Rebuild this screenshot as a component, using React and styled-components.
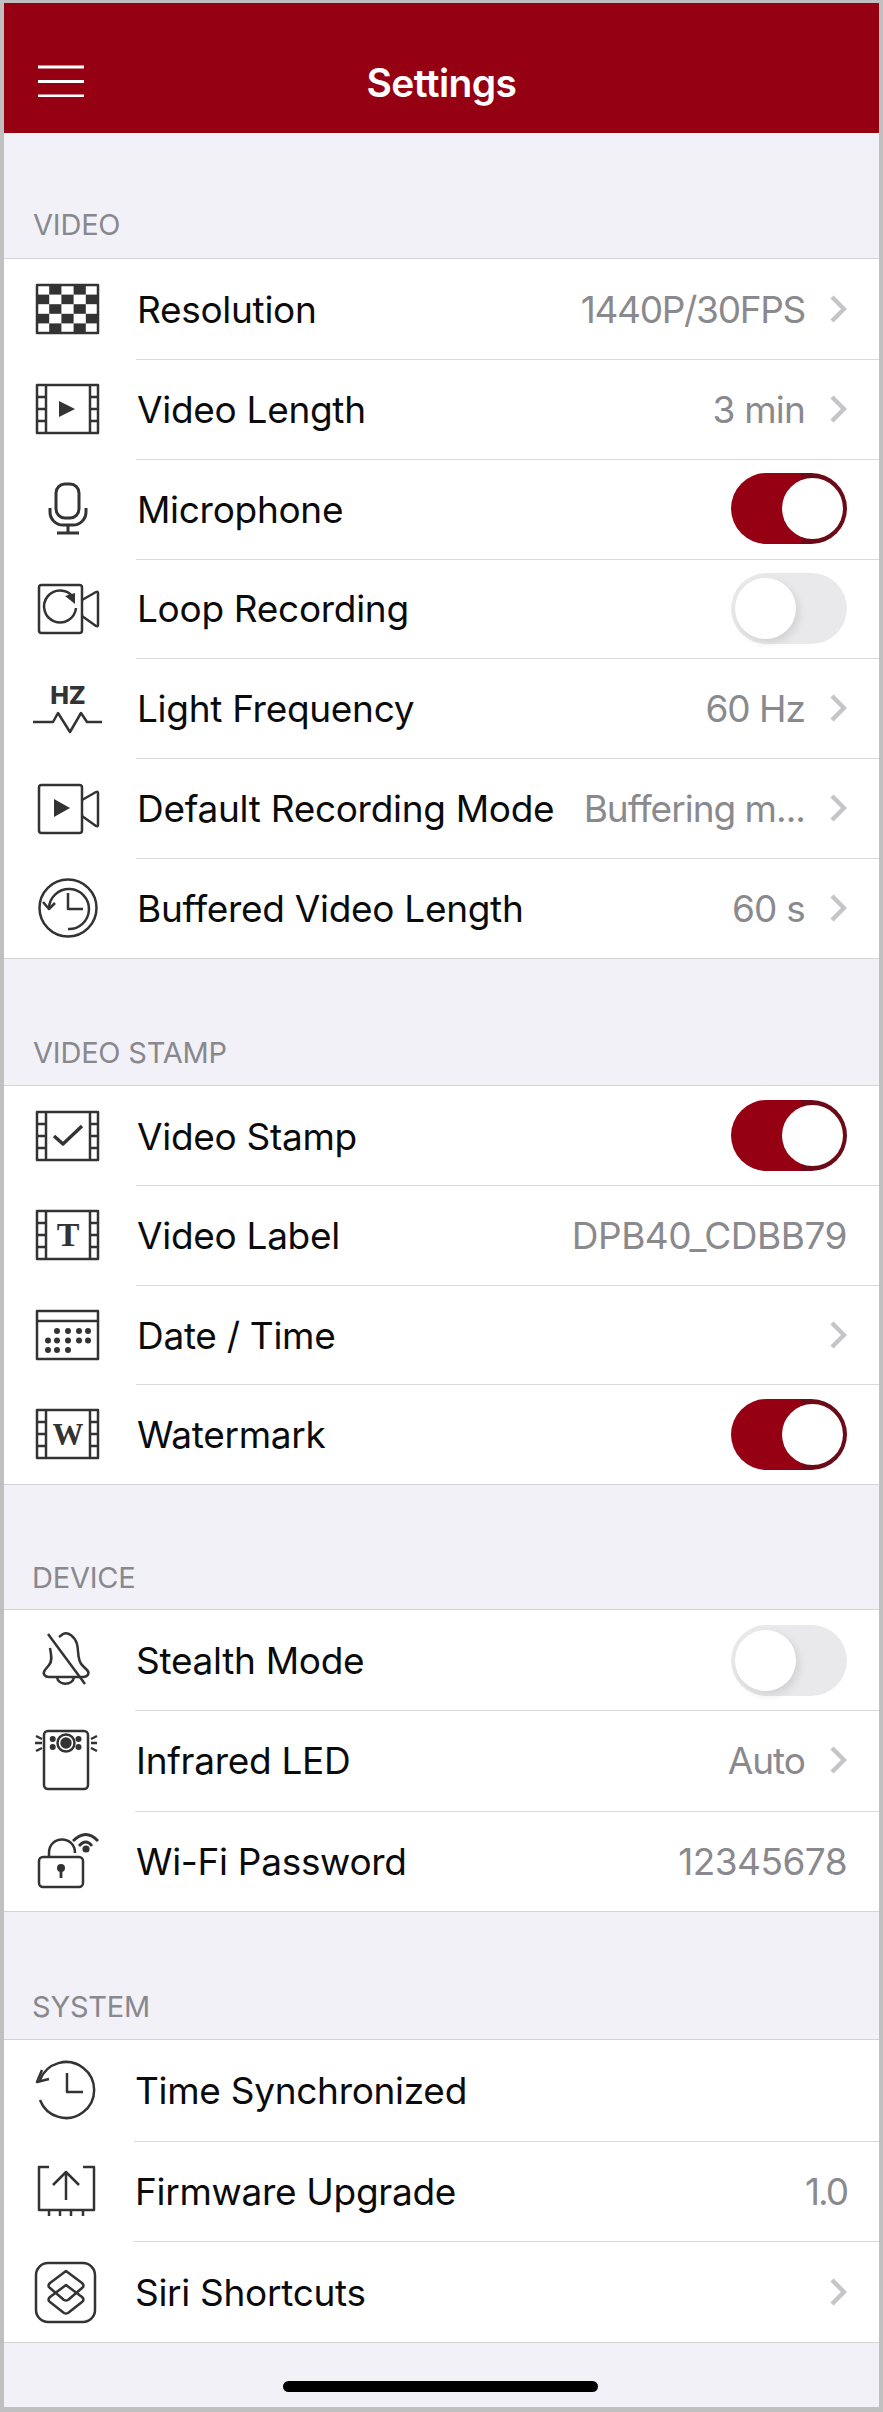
import React from 'react';
import styled, { createGlobalStyle } from 'styled-components';

const Global = createGlobalStyle`
  html, body { margin: 0; padding: 0; background: #c0c0c0; }
  body { font-family: Inter, "Liberation Sans", sans-serif; -webkit-font-smoothing: antialiased; }
`;

const Frame = styled.div`
  box-sizing: border-box;
  width: 883px;
  height: 2412px;
  padding: 3px 4px 5px;
`;

const Screen = styled.div`
  position: relative;
  height: 100%;
  background: #f1f1f7;
  overflow: hidden;
`;

const NavBar = styled.header`
  position: relative;
  height: 130px;
  background: #950013;
  display: flex;
  align-items: center;
  justify-content: center;
`;

const MenuButton = styled.svg`
  position: absolute;
  left: 34px;
  top: 62px;
`;

const Title = styled.h1`
  margin: 0;
  padding-top: 28px;
  color: #fff;
  font-size: 39px;
  font-weight: 600;
  letter-spacing: -0.6px;
`;

const Section = styled.section`
  padding-top: ${(p) => p.$gap}px;
`;

const SectionTitle = styled.div`
  height: ${(p) => p.$height}px;
  padding-left: ${(p) => p.$inset}px;
  color: #88888d;
  font-size: 29px;
  line-height: 36px;
  letter-spacing: -0.2px;
`;

const Group = styled.div`
  background: #fff;
  border-top: 1px solid #d4d4d7;
  border-bottom: 1px solid #d4d4d7;
`;

const Row = styled.div`
  box-sizing: border-box;
  height: ${(p) => p.$height}px;
  display: flex;
  align-items: center;
  padding-left: 28px;
`;

const IconSlot = styled.svg`
  flex: none;
  width: 72px;
  height: 72px;
  margin-left: ${(p) => p.$shift}px;
  margin-right: ${(p) => 32 - p.$shift - p.$pull}px;
  fill: none;
  stroke: #333;
  stroke-width: 2.5;
  stroke-linejoin: round;
`;

const RowBody = styled.div`
  flex: 1;
  min-width: 0;
  height: 100%;
  display: flex;
  align-items: center;
  padding-right: 32px;
  gap: 28px;
  box-shadow: ${(p) => (p.$last ? 'none' : '0 1px 0 #d9d9dc')};
`;

const Label = styled.div`
  flex: none;
  margin-left: 1px;
  margin-right: auto;
  padding-top: 1px;
  color: #0b0b0b;
  font-size: 37px;
  letter-spacing: -0.3px;
  white-space: nowrap;
`;

const Value = styled.div`
  padding-top: 1px;
  color: #8a8a8e;
  font-size: 37px;
  letter-spacing: ${(p) => p.$tracking}px;
  white-space: nowrap;
`;

const Chevron = styled.svg`
  flex: none;
  width: 17px;
  height: 28px;
  margin-left: -3px;
  fill: none;
  stroke: #c5c5c8;
  stroke-width: 4.4;
`;

const Track = styled.div`
  position: relative;
  flex: none;
  width: 116px;
  height: 71px;
  border-radius: 36px;
  background: ${(p) =>
    p.$on ? 'linear-gradient(to right, #950013 60%, #6c0a18 60%)' : '#e9e9eb'};
`;

const Knob = styled.div`
  position: absolute;
  top: 5px;
  left: ${(p) => (p.$on ? '51px' : '4px')};
  width: 61px;
  height: 61px;
  border-radius: 50%;
  background: #fff;
  box-shadow: ${(p) => (p.$on ? 'none' : '3px 4px 8px rgba(0,0,0,0.1)')};
`;

const HomeBar = styled.div`
  position: absolute;
  left: 279px;
  bottom: 15px;
  width: 315px;
  height: 11px;
  border-radius: 6px;
  background: #000;
`;

const filmStrip = (
  <>
    <rect x="5" y="12" width="61" height="48" />
    <path d="M14 12v48M58 12v48M5 24h9M5 36h9M5 48h9M58 24h8M58 36h8M58 48h8" />
  </>
);

const Solid = styled.g`
  fill: #333;
  stroke: none;
`;

const Glyph = styled.text`
  font-family: "Liberation Serif", serif;
  font-weight: 700;
  fill: #333;
  stroke: none;
  text-anchor: middle;
`;

const Heavy = styled.text`
  font-family: Inter, sans-serif;
  font-weight: 800;
  font-size: 25px;
  fill: #333;
  stroke: none;
  text-anchor: middle;
`;

const checkerCells = [];
for (let r = 0; r < 5; r++) {
  for (let c = 0; c < 5; c++) {
    if ((r + c) % 2 === 1) {
      checkerCells.push(<rect key={`${r}-${c}`} x={5 + c * 12.2} y={12 + r * 9.6} width="12.2" height="9.6" />);
    }
  }
}

const calendarDots = [
  [25, 32], [36, 32], [47, 32], [56, 32],
  [16, 41.5], [25, 41.5], [36, 41.5], [47, 41.5], [56, 41.5],
  [16, 51], [25, 51], [36, 51],
];

const icons = {
  checker: (
    <>
      <rect x="5" y="12" width="61" height="48" />
      <Solid>{checkerCells}</Solid>
    </>
  ),
  film: (
    <>
      {filmStrip}
      <Solid><path d="M27 28l16 8-16 8z" /></Solid>
    </>
  ),
  mic: (
    <g strokeWidth="3">
      <rect x="24" y="11" width="23" height="34" rx="9" />
      <path d="M18 35v4a13 13 0 0 0 13 13h10a13 13 0 0 0 13-13v-4M36 52v8M25 60h22" />
    </g>
  ),
  loop: (
    <>
      <rect x="7" y="13" width="43" height="48" rx="2.5" />
      <path d="M50 28l14-8q2-1 2 1v32q0 2-2 1l-14-10" />
      <path d="M41 25A16 16 0 1 0 44 36" />
      <Solid><path d="M33 24l10-3 0 11z" /></Solid>
    </>
  ),
  hz: (
    <>
      <Heavy x="36" y="32">HZ</Heavy>
      <path d="M1 50H21L26 41 38 60 49 41 55 50H70" />
    </>
  ),
  play: (
    <>
      <rect x="7" y="13" width="43" height="48" rx="2.5" />
      <path d="M50 28l14-8q2-1 2 1v32q0 2-2 1l-14-10" />
      <Solid><path d="M22 27l16 9-16 9z" /></Solid>
    </>
  ),
  buffered: (
    <>
      <circle cx="36" cy="36" r="28.5" />
      <path d="M36 21V37H51" />
      <path d="M17 36A20 20 0 1 1 36 57" />
      <path d="M11 30l6 7 6-6" />
    </>
  ),
  stamp: (
    <>
      {filmStrip}
      <path strokeWidth="3.4" d="M22 36l9 8 19-18" />
    </>
  ),
  label: (
    <>
      {filmStrip}
      <Glyph x="36" y="47" fontSize="34">T</Glyph>
    </>
  ),
  calendar: (
    <>
      <rect x="5" y="12" width="61" height="48" />
      <path d="M5 22h61" />
      <Solid>
        {calendarDots.map(([x, y]) => <circle key={`${x}-${y}`} cx={x} cy={y} r="3" />)}
      </Solid>
    </>
  ),
  watermark: (
    <>
      {filmStrip}
      <Glyph x="36" y="47" fontSize="31">W</Glyph>
    </>
  ),
  bell: (
    <>
      <path d="M20 24C21 30 23 37 19 41L15 46C12 50 15 53 19 53H53C58 53 60 49 57 46L52 41C47 36 49 28 47 20C45 13 38 7 33 10L29 13" />
      <path d="M27 53C28 62 43 62 44 53" />
      <path d="M18 10L55 60" />
    </>
  ),
  infrared: (
    <>
      <rect x="14" y="7" width="44" height="58" rx="4" />
      <circle cx="36" cy="19" r="8.5" />
      <Solid>
        <circle cx="36" cy="19" r="5.7" />
        <circle cx="22.7" cy="15" r="3" />
        <circle cx="22.7" cy="23" r="3" />
        <circle cx="48.5" cy="15" r="3" />
        <circle cx="48.5" cy="23" r="3" />
      </Solid>
      <path d="M6 12l6 3M5 19h7M6 27l6-3M67 12l-6 3M67 19h-6M67 27l-6-3" />
    </>
  ),
  wifiLock: (
    <>
      <rect x="9" y="32" width="44" height="30" rx="4" />
      <path d="M19 32V28C19 10 45 10 45 28" />
      <Solid>
        <circle cx="31" cy="43" r="4" />
        <rect x="29.6" y="44" width="2.8" height="9" />
        <circle cx="56" cy="24" r="3.6" />
      </Solid>
      <path d="M43 16Q56 3 68 16M49 21Q56 13 62 21" strokeWidth="2.8" />
    </>
  ),
  sync: (
    <>
      <path d="M10 26A28 28 0 1 1 10 46" />
      <path d="M12 16L7 28l12-3" />
      <path d="M37 19V38H53" />
    </>
  ),
  firmware: (
    <>
      <path d="M19 12H9V55H64V12H53" />
      <path d="M36 45V17M23 30L36 17 49 30M19 55v6M30 55v6M41 55v6M53 55v6" />
    </>
  ),
  shortcuts: (
    <>
      <rect x="6" y="7" width="59" height="59" rx="12" />
      <path d="M36 15L52 27q3 3 0 5L38 44q-2 1-4 0L20 32q-3-2 0-5z" />
      <path d="M36 29L52 41q3 3 0 5L38 57q-2 1-4 0L20 46q-3-2 0-5z" />
    </>
  ),
};

const sections = [
  {
    title: 'VIDEO', gap: 74, head: 51, inset: 29, rowHeight: 99.857, shift: 0, pull: 0,
    rows: [
      { icon: 'checker', label: 'Resolution', value: '1440P/30FPS', tracking: -1.3, chevron: true },
      { icon: 'film', label: 'Video Length', value: '3 min', tracking: -0.8, chevron: true },
      { icon: 'mic', label: 'Microphone', toggle: true },
      { icon: 'loop', label: 'Loop Recording', toggle: false },
      { icon: 'hz', label: 'Light Frequency', value: '60 Hz', tracking: -1, chevron: true },
      { icon: 'play', label: 'Default Recording Mode', value: 'Buffering m...', tracking: -1, chevron: true },
      { icon: 'buffered', label: 'Buffered Video Length', value: '60 s', tracking: -0.8, chevron: true },
    ],
  },
  {
    title: 'VIDEO STAMP', gap: 76, head: 50, inset: 29, rowHeight: 99.5, shift: 0, pull: 0,
    rows: [
      { icon: 'stamp', label: 'Video Stamp', toggle: true },
      { icon: 'label', label: 'Video Label', value: 'DPB40_CDBB79', tracking: -0.5 },
      { icon: 'calendar', label: 'Date / Time', chevron: true },
      { icon: 'watermark', label: 'Watermark', toggle: true },
    ],
  },
  {
    title: 'DEVICE', gap: 75, head: 49, inset: 28, rowHeight: 100.33, shift: -2, pull: 1,
    rows: [
      { icon: 'bell', label: 'Stealth Mode', toggle: false },
      { icon: 'infrared', label: 'Infrared LED', value: 'Auto', tracking: -1, chevron: true },
      { icon: 'wifiLock', label: 'Wi-Fi Password', value: '12345678', tracking: -0.55 },
    ],
  },
  {
    title: 'SYSTEM', gap: 77, head: 50, inset: 28, rowHeight: 100.67, shift: -2, pull: 2,
    rows: [
      { icon: 'sync', label: 'Time Synchronized' },
      { icon: 'firmware', label: 'Firmware Upgrade', value: '1.0', tracking: -2 },
      { icon: 'shortcuts', label: 'Siri Shortcuts', chevron: true },
    ],
  },
];

function SettingRow({ row, height, shift, pull, last }) {
  return (
    <Row $height={height}>
      <IconSlot viewBox="0 0 72 72" $shift={shift} $pull={pull}>{icons[row.icon]}</IconSlot>
      <RowBody $last={last}>
        <Label>{row.label}</Label>
        {row.value && <Value $tracking={row.tracking}>{row.value}</Value>}
        {row.chevron && (
          <Chevron viewBox="0 0 17 28"><path d="M2 2l12 12L2 26" /></Chevron>
        )}
        {row.toggle !== undefined && (
          <Track $on={row.toggle}><Knob $on={row.toggle} /></Track>
        )}
      </RowBody>
    </Row>
  );
}

export default function App() {
  return (
    <>
      <Global />
      <Frame>
        <Screen>
          <NavBar>
            <MenuButton width="46" height="32" viewBox="0 0 46 32">
              <path d="M0 2h46M0 16.5h46M0 31h46" stroke="#fff" strokeWidth="3" />
            </MenuButton>
            <Title>Settings</Title>
          </NavBar>
          {sections.map((s) => (
            <Section key={s.title} $gap={s.gap}>
              <SectionTitle $height={s.head} $inset={s.inset}>{s.title}</SectionTitle>
              <Group>
                {s.rows.map((row, i) => (
                  <SettingRow
                    key={row.label}
                    row={row}
                    height={s.rowHeight}
                    shift={s.shift}
                    pull={s.pull}
                    last={i === s.rows.length - 1}
                  />
                ))}
              </Group>
            </Section>
          ))}
          <HomeBar />
        </Screen>
      </Frame>
    </>
  );
}
